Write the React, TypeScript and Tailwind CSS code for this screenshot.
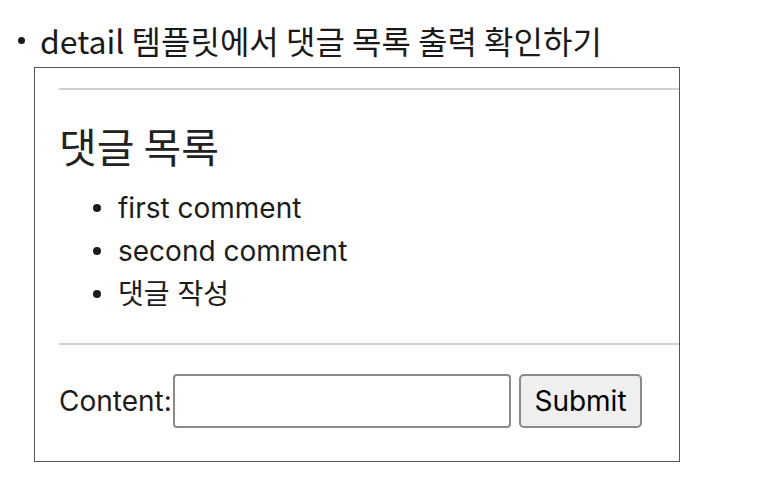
export default function App() {
    const comments = ['first comment', 'second comment', '댓글 작성'];

    return (
        <main className="w-[759px] h-[477px] bg-white text-[#111] overflow-hidden">
            {/* Slide bullet heading */}
            <section className="h-[67px] flex items-start pt-[20px] pl-[18px]">
                <span className="mt-[17px] w-[7px] h-[7px] rounded-full bg-[#1a1a1a] shrink-0" />
                <h1 className="ml-[15px] text-[32px] leading-[40px] text-[#1a1a1a]" style={{ fontFamily: '"Noto Sans CJK KR", sans-serif' }}>
                    detail 템플릿에서 댓글 목록 출력 확인하기
                </h1>
            </section>

            {/* Screenshot box */}
            <section
                className="ml-[34px] w-[646px] h-[395px] border border-[#555] overflow-hidden pl-[24px] flex flex-col"
                style={{ fontFamily: 'Inter, "Noto Sans CJK KR", sans-serif' }}
            >
                <div className="mt-[20px] h-[2px] bg-[#d2d2d2]" />

                <h2 className="mt-[31px] text-[41px] leading-[48px] text-[#222]" style={{ fontFamily: '"Noto Sans CJK KR", sans-serif' }}>
                    댓글 목록
                </h2>

                <ul className="mt-[17px] flex flex-col">
                    {comments.map((c) => (
                        <li key={c} className="h-[43px] flex items-center text-[28px] text-[#1c1c1c]">
                            <span className="ml-[34px] w-[8px] h-[8px] rounded-full bg-[#1c1c1c] shrink-0" />
                            <span className="ml-[17px]">{c}</span>
                        </li>
                    ))}
                </ul>

                <div className="mt-[28px] h-[2px] bg-[#d2d2d2]" />

                <form className="mt-[29px] flex items-center" onSubmit={(e) => e.preventDefault()}>
                    <label className="w-[114px] text-[28px] text-[#1c1c1c] whitespace-nowrap">Content:</label>
                    <input className="w-[338px] h-[54px] border-2 border-[#8a8a8a] rounded-[4px] bg-white" />
                    <button className="ml-[8px] w-[123px] h-[54px] border-2 border-[#8a8a8a] rounded-[5px] bg-[#efefef] text-[28px] text-black">
                        Submit
                    </button>
                </form>
            </section>
        </main>
    );
}
